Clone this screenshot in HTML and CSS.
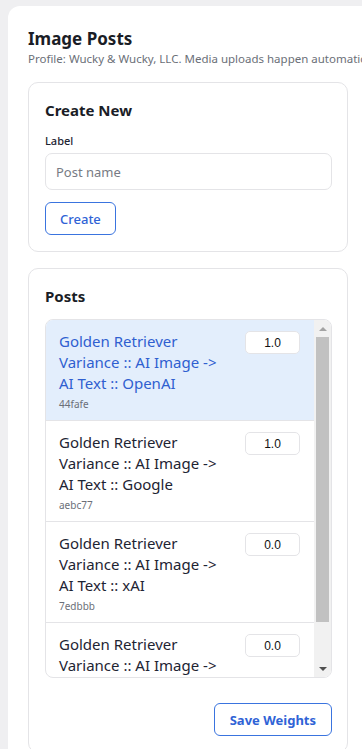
FILE: index.html
```html
<!DOCTYPE html>
<html lang="en">
<head>
    <meta charset="UTF-8">
    <meta name="viewport" content="width=device-width, initial-scale=1.0">
    <title>Image Posts</title>
    <link rel="stylesheet" href="styles.css">
</head>
<body>
    <div class="panel">
        <h1>Image Posts</h1>
        <p class="subtitle">Profile: Wucky &amp; Wucky, LLC. Media uploads happen automatically when a post is published.</p>

        <div class="card">
            <h3>Create New</h3>
            <label for="postName" class="field-label">Label</label>
            <input type="text" id="postName" class="text-input" placeholder="Post name">
            <div class="row-left">
                <button class="btn">Create</button>
            </div>
        </div>

        <div class="card">
            <h3>Posts</h3>
            <div class="post-list">
                <div class="post-rows">
                    <div class="post selected">
                        <div class="post-info">
                            <div class="post-title">Golden Retriever Variance :: AI Image -&gt; AI Text :: OpenAI</div>
                            <div class="post-id">44fafe</div>
                        </div>
                        <input type="text" class="weight" value="1.0">
                    </div>
                    <div class="post">
                        <div class="post-info">
                            <div class="post-title">Golden Retriever Variance :: AI Image -&gt; AI Text :: Google</div>
                            <div class="post-id">aebc77</div>
                        </div>
                        <input type="text" class="weight" value="1.0">
                    </div>
                    <div class="post">
                        <div class="post-info">
                            <div class="post-title">Golden Retriever Variance :: AI Image -&gt; AI Text :: xAI</div>
                            <div class="post-id">7edbbb</div>
                        </div>
                        <input type="text" class="weight" value="0.0">
                    </div>
                    <div class="post">
                        <div class="post-info">
                            <div class="post-title">Golden Retriever Variance :: AI Image -&gt; AI Text :: Anthropic</div>
                            <div class="post-id">c91d02</div>
                        </div>
                        <input type="text" class="weight" value="0.0">
                    </div>
                </div>
                <!-- scrollbar drawn by hand so it shows in the screenshot -->
                <div class="scrollbar">
                    <span class="arrow arrow-up"></span>
                    <div class="track"><div class="thumb"></div></div>
                    <span class="arrow arrow-down"></span>
                </div>
            </div>
            <div class="actions">
                <button class="btn btn-bold">Save Weights</button>
            </div>
        </div>
    </div>
</body>
</html>
```

FILE: styles.css
```css
html {
    overflow-x: hidden;
}
body {
    margin: 0;
    padding: 6px 0 0 8px;
    background-color: #efeff1;
    font-family: 'Noto Sans', 'Open Sans', sans-serif;
    color: #1e2433;
}
.panel {
    width: 360px;
    background: #ffffff;
    border-radius: 12px 0 0 0;
    padding: 22px 20px 0 20px;
    box-sizing: border-box;
    min-height: 760px;
}
h1 {
    font-size: 17px;
    line-height: 22px;
    font-weight: 700;
    margin: 0;
    color: #1a1d26;
}
.subtitle {
    font-size: 11.5px;
    line-height: 15px;
    color: #6b6f78;
    margin: 1px 0 0 0;
    white-space: nowrap;
}
.card {
    border: 1px solid #e4e4e7;
    border-radius: 10px;
    padding: 16px 15px 16px 16px;
    margin-top: 16px;
    margin-bottom: 1px;
}
h3 {
    font-size: 15px;
    line-height: 22px;
    font-weight: 700;
    margin: 0 0 12px 0;
    color: #1a1d26;
}
.field-label {
    display: block;
    font-size: 11px;
    line-height: 15px;
    font-weight: 500;
    margin-top: 2px;
    margin-bottom: 5px;
}
.text-input {
    display: block;
    width: 100%;
    box-sizing: border-box;
    height: 37px;
    border: 1px solid #e4e4e7;
    border-radius: 7px;
    padding: 0 10px;
    font-family: inherit;
    font-size: 13px;
    color: #1e2433;
    outline: none;
}
.text-input::placeholder {
    color: #777b84;
}
.row-left {
    display: flex;
    margin-top: 12px;
}
.btn {
    height: 33px;
    padding: 0 14px;
    background: #ffffff;
    border: 1px solid #3a74df;
    border-radius: 6px;
    color: #2f63d6;
    font-family: inherit;
    font-size: 13px;
    font-weight: 500;
    cursor: pointer;
}
.btn-bold {
    font-weight: 700;
    padding: 0 15px;
}
.post-list {
    display: flex;
    height: 359px;
    box-sizing: border-box;
    border: 1px solid #e4e4e7;
    border-radius: 8px;
    overflow: hidden;
}
.post-rows {
    flex: 1;
    overflow: hidden;
}
.scrollbar {
    width: 17px;
    flex-shrink: 0;
    background: #f1f1f1;
    display: flex;
    flex-direction: column;
}
.arrow {
    height: 17px;
    display: flex;
    align-items: center;
    justify-content: center;
}
.arrow::before {
    content: "";
    width: 0;
    height: 0;
    border-left: 4px solid transparent;
    border-right: 4px solid transparent;
}
.arrow-up::before {
    border-bottom: 4px solid #a3a3a3;
}
.arrow-down::before {
    border-top: 4px solid #505050;
}
.track {
    flex: 1;
    padding: 0 2px;
}
.thumb {
    height: 285px;
    background: #c1c1c1;
}
.post {
    display: flex;
    align-items: flex-start;
    gap: 10px;
    padding: 11px 14px 9px 13px;
    border-bottom: 1px solid #e4e4e7;
}
.post:last-child {
    border-bottom: none;
}
.post.selected {
    background: #e3eefc;
}
.post-info {
    flex: 1;
}
.post-title {
    font-size: 15px;
    line-height: 21px;
    font-weight: 400;
    color: #1e2433;
}
.selected .post-title {
    color: #2f5fd0;
}
.post-id {
    font-size: 10px;
    line-height: 14px;
    color: #6b6f78;
    margin-top: 3px;
}
.weight {
    width: 55px;
    height: 23px;
    box-sizing: border-box;
    border: 1px solid #e4e4e7;
    border-radius: 5px;
    text-align: center;
    font-family: 'Liberation Sans', Arial, sans-serif;
    font-size: 12px;
    color: #111111;
    background: #ffffff;
    padding: 0;
    flex-shrink: 0;
}
.actions {
    display: flex;
    justify-content: flex-end;
    margin-top: 25px;
}
```
